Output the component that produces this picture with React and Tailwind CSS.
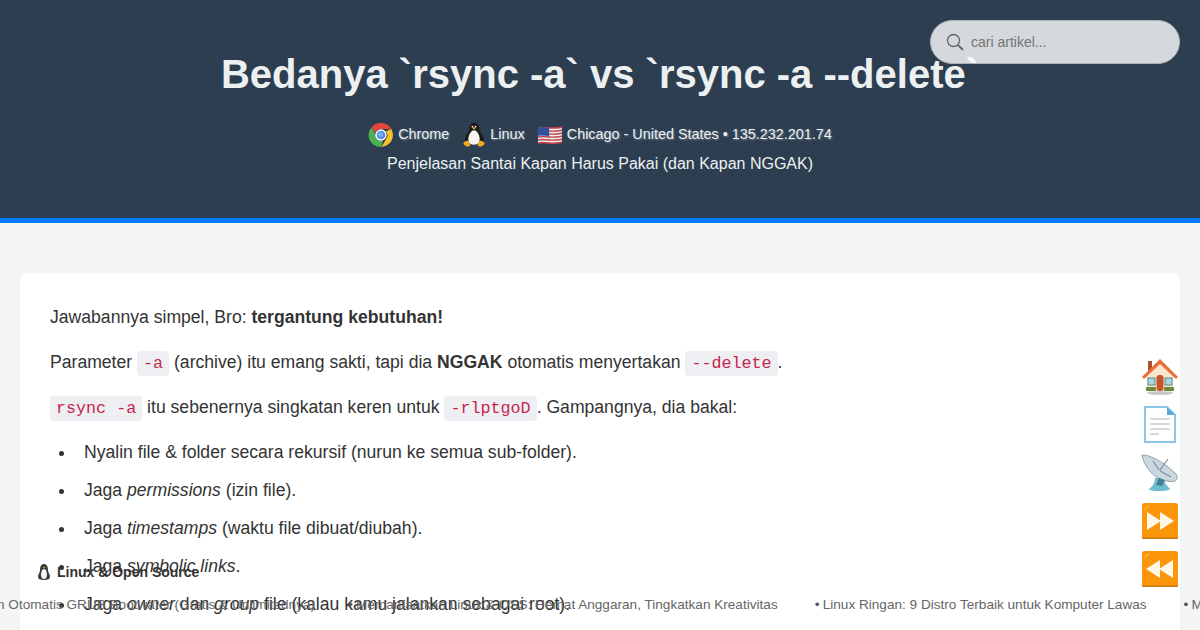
import React from "react";

const Code = ({ children }) => (
  <code className="font-['Liberation_Mono',monospace] text-[16.72px] leading-[18px] text-[#c7254e] bg-[#eeeff2] rounded-[4px] px-[6px] py-[3px]">{children}</code>
);

const Chrome = () => (
  <svg width="26" height="26" viewBox="0 0 48 48" className="shrink-0">
    <path d="M24 2a22 22 0 0 1 19.05 11H24a11 11 0 0 0-10.3 7.2L6.3 10A22 22 0 0 1 24 2z" fill="#e5463b" />
    <path d="M43.05 13A22 22 0 0 1 25 46l9-15.6A11 11 0 0 0 33 17z" fill="#fbc02d" />
    <path d="M25 46A22 22 0 0 1 6.3 10l9.2 16a10 10 0 0 0 12 8.5z" fill="#4caf50" />
    <circle cx="24" cy="24" r="10.5" fill="#fff" />
    <circle cx="24" cy="24" r="8" fill="#4f8fe0" />
    <circle cx="23" cy="23" r="4.5" fill="#7fb0ee" />
  </svg>
);

const Tux = ({ s = 26 }) => (
  <svg width={s} height={s} viewBox="0 0 32 32" className="shrink-0">
    <path d="M16 1c-4 0-5.500 3-5.500 6.500 0 3-.5 4-2.500 7-2 3-3.500 6-3 9.500h23c.5-3.500-1-6.500-3-9.500-2-3-2.500-4-2.500-7C22 4 20 1 16 1z" fill="#1a1a1a" />
    <path d="M16 10c-3.500 0-7 6-7 11s2.500 7 7 7 7-2 7-7-3.500-11-7-11z" fill="#f4f4f0" />
    <path d="M13 6.500h6l-3 3z" fill="#f0a81e" />
    <circle cx="14" cy="5.500" r="1" fill="#fff" /><circle cx="18" cy="5.500" r="1" fill="#fff" />
    <path d="M3 27c0-3 3-4 5.500-4 2 1.500 3 4 3 5.500-1 1.500-3 2-4.500 1.500-1.500-1-3-1.500-4-3zM29 27c0-3-3-4-5.500-4-2 1.500-3 4-3 5.500 1 1.500 3 2 4.500 1.500 1.500-1 3-1.500 4-3z" fill="#f0a81e" />
  </svg>
);

const Flag = () => (
  <svg width="26" height="20" viewBox="0 0 26 20" className="shrink-0">
    <g fill="none" strokeWidth="1.600">
      {[2.5, 5.5, 8.5, 11.5, 14.500, 17.5].map((y) => (
        <path key={y} d={`M1 ${y + 0.5}c6 -1.800 10 1.800 24 -.8`} stroke="#d8414a" />
      ))}
      {[4, 7, 10, 13, 16].map((y) => (
        <path key={y} d={`M1 ${y + 0.5}c6 -1.800 10 1.800 24 -.8`} stroke="#f6e9e9" />
      ))}
    </g>
    <path d="M1 2.500c4-1 7-.6 11 .2v8.500c-4-.8-7-1-11-.2z" fill="#33509f" />
  </svg>
);

const House = () => (
  <svg width="38" height="38" viewBox="0 0 38 38">
    <ellipse cx="19" cy="35" rx="13" ry="2" fill="#c8c8c8" />
    <rect x="7" y="3" width="4" height="10" fill="#a5532f" />
    <path d="M6 16 19 4l13 12v17H6z" fill="#fbe6cb" />
    <path d="M1 19 19 1l18 18-2 2L19 6 3 21z" fill="#e86f3c" />
    <rect x="15.500" y="17" width="7" height="16" rx="3" fill="#c4552d" />
    <rect x="7" y="20" width="7" height="7" fill="#a9d6e0" stroke="#5d8a8a" />
    <rect x="24" y="20" width="7" height="7" fill="#a9d6e0" stroke="#5d8a8a" />
    <rect x="5" y="29" width="10" height="4" rx="1" fill="#6f8a3a" />
    <rect x="23" y="29" width="10" height="4" rx="1" fill="#6f8a3a" />
  </svg>
);

const Doc = () => (
  <svg width="38" height="38" viewBox="0 0 38 38">
    <path d="M4 1h22l8 8v27H4z" fill="#fff" stroke="#8dc4ea" strokeWidth="2" />
    <path d="M26 1l8 8h-8z" fill="#5ba7e0" />
    <path d="M9 13h20M9 18h20M9 23h20M9 28h9" stroke="#a9b4bd" strokeWidth="1.200" />
  </svg>
);

const Dish = () => (
  <svg width="38" height="38" viewBox="0 0 38 38">
    <path d="M8 35c3-2 6-6 6-11h8c1 4 4 8 7 11 0 2.500-21 3-21 0z" fill="#6dbdd0" />
    <path d="M1 1c6-1 22 7 34 19 2 3 1 6-1 7C22 30 5 20 1 1z" fill="#cbd7df" stroke="#8aa0ad" strokeWidth="1" />
    <path d="M19 16 27 5M19 17l11 6M18 16l-6-9" stroke="#7b8f9c" strokeWidth="1.200" />
    <path d="M18 24l6 2-3 6-6-1z" fill="#45808f" />
  </svg>
);

const Arrow = ({ back }) => (
  <svg width="38" height="38" viewBox="0 0 38 38">
    <rect x="1" y="1" width="36" height="36" rx="2.500" fill="#fb9608" />
    <rect x="1" y="35" width="36" height="2" rx="1" fill="#d97d05" />
    <path d="M3 10c0-4 2-6 6-6-3 1-5 3-6 6z" fill="#ffc875" />
    {back ? (
      <path d="M19 10v18L5 19zM32 10v18L18 19z" fill="#fff7e8" />
    ) : (
      <path d="M6 10v18l14-9zM19 10v18l14-9z" fill="#fff7e8" />
    )}
  </svg>
);

const TickerItem = ({ children }) => (
  <span className="flex items-center whitespace-nowrap pr-[37px]">
    <span className="w-[8px] text-[#555]">•</span>
    <span>{children}</span>
  </span>
);

export default function App() {
  return (
    <div className="relative h-[630px] overflow-hidden bg-[#f4f6f6] font-['Liberation_Sans',Arial,sans-serif] text-[#333]">
      <header className="h-[223px] bg-[#2c3e50] border-b-[5px] border-[#007bff] text-[#ecf0f1] flex flex-col items-center pt-[50px]">
        <h1 className="text-[40px] leading-[48px] font-bold text-center whitespace-nowrap">Bedanya `rsync -a` vs `rsync -a --delete`</h1>
        <div className="flex items-center mt-[23px] h-[28px] text-[14.4px] text-[#ecf0f1] [text-shadow:1px_1px_2px_rgba(255,255,255,0.35)]">
          <Chrome />
          <span className="ml-[4px] mr-[12px]">Chrome</span>
          <Tux />
          <span className="ml-[3px] mr-[12px]">Linux</span>
          <Flag />
          <span className="ml-[4px]">Chicago - United States • 135.232.201.74</span>
        </div>
        <p className="mt-[6px] text-[16px] leading-[18px]">Penjelasan Santai Kapan Harus Pakai (dan Kapan NGGAK)</p>
      </header>

      <div className="absolute left-[930px] top-[20px] w-[250px] h-[44px] rounded-[22px] bg-white/80 border border-[#aab1b6] flex items-center pl-[15px] text-[14px] text-[#757575]">
        <svg width="18" height="18" viewBox="0 0 18 18" fill="none" stroke="#666" strokeWidth="1.300">
          <circle cx="7.500" cy="7.500" r="6" />
          <path d="M12 12l5 5" strokeWidth="1.800" />
        </svg>
        <span className="ml-[7px]">cari artikel...</span>
      </div>

      <main className="px-[20px] pt-[50px]">
        <article className="bg-white rounded-[8px] px-[30px] pt-[32px] pb-[60px] text-[17.6px] leading-[24px] text-[#333]">
          <p>Jawabannya simpel, Bro: <strong>tergantung kebutuhan!</strong></p>
          <p className="mt-[21px]">Parameter <Code>-a</Code> (archive) itu emang sakti, tapi dia <strong>NGGAK</strong> otomatis menyertakan <Code>--delete</Code>.</p>
          <p className="mt-[21px]"><Code>rsync -a</Code> itu sebenernya singkatan keren untuk <Code>-rlptgoD</Code>. Gampangnya, dia bakal:</p>
          <ul className="mt-[21px] list-disc pl-[26px] flex flex-col gap-[14px]">
            <li className="pl-[8px]">Nyalin file &amp; folder secara rekursif (nurun ke semua sub-folder).</li>
            <li className="pl-[8px]">Jaga <em>permissions</em> (izin file).</li>
            <li className="pl-[8px]">Jaga <em>timestamps</em> (waktu file dibuat/diubah).</li>
            <li className="pl-[8px]">Jaga <em>symbolic links</em>.</li>
            <li className="pl-[8px]">Jaga <em>owner</em> dan <em>group</em> file (kalau kamu jalankan sebagai root).</li>
          </ul>
        </article>
      </main>

      <nav className="absolute left-[1141px] top-[358px] flex flex-col gap-[10px]">
        <House />
        <Doc />
        <Dish />
        <Arrow />
        <Arrow back />
      </nav>

      <div className="absolute left-[37px] top-[563px] flex items-center text-[14px] leading-[18px] font-bold text-[#333]">
        <span className="mr-[6px] flex"><svg width="14" height="16" viewBox="0 0 14 16"><path d="M7 0C4 0 3 3 3 6c0 3-2 4-2 7 0 2 2 3 6 3s6-1 6-3c0-3-2-4-2-7 0-3-1-6-4-6z" fill="#3a3a3a" /><path d="M7 5c-2 0-3 3-3 6 0 2 1 4 3 4s3-2 3-4c0-3-1-6-3-6z" fill="#f5f5f0" /><path d="M5.500 3h3L7 4.500z" fill="#e8a020" /></svg></span>
        Linux &amp; Open Source
      </div>

      <div className="absolute left-0 right-0 top-[596px] overflow-hidden text-[13.6px] leading-[18px] text-[#666]">
        <div className="flex -ml-[3px] w-max">
          <span className="whitespace-nowrap pr-[33px]">n Otomatis GRUB Bootwater (Gratis &amp; Unlimitednya)</span>
          <TickerItem>Memanfaatkan Linux &amp; OSS: Hemat Anggaran, Tingkatkan Kreativitas</TickerItem>
          <TickerItem>Linux Ringan: 9 Distro Terbaik untuk Komputer Lawas</TickerItem>
          <TickerItem>Mengenal Linux</TickerItem>
        </div>
      </div>
    </div>
  );
}
